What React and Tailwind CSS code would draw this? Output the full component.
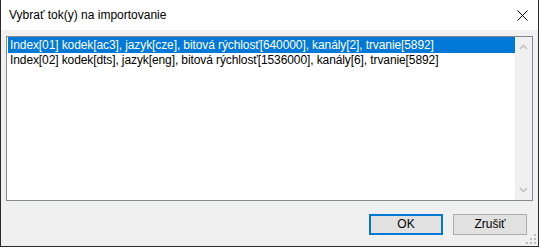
export default function App() {
  const font = { fontFamily: '"Segoe UI", "Liberation Sans", Arial, sans-serif' };
  return (
    <div
      className="w-[539px] h-[247px] flex flex-col bg-[#f0f0f0] border-l border-r border-b border-[#2b2b2b] relative text-[12px] text-black"
      style={font}
    >
      {/* Title bar */}
      <div className="h-[30px] bg-white flex items-center justify-between shrink-0">
        <span className="pl-[8px] leading-[15px]">Vybrať tok(y) na importovanie</span>
        <div className="w-[30px] h-[30px] mr-[1px] flex items-center justify-center">
          <svg width="11" height="11" viewBox="0 0 11 11">
            <path d="M0.5 0.5 L10.5 10.5 M10.5 0.5 L0.5 10.5" stroke="#000" strokeWidth="1" />
          </svg>
        </div>
      </div>

      {/* Body */}
      <div className="flex flex-col pt-[6px] pl-[5px] pr-[5px]">
        <div className="h-[165px] border border-[#828790] bg-white flex">
          <div className="flex-1 pl-[1px] flex flex-col tracking-[-0.1px]">
            <div className="h-[16px] bg-[#0078d7] text-white pl-[2px] leading-[16px] whitespace-nowrap">
              Index[01] kodek[ac3], jazyk[cze], bitová rýchlosť[640000], kanály[2], trvanie[5892]
            </div>
            <div className="h-[15px] pl-[2px] leading-[14px] whitespace-nowrap">
              Index[02] kodek[dts], jazyk[eng], bitová rýchlosť[1536000], kanály[6], trvanie[5892]
            </div>
          </div>
          <div className="w-[17px] bg-[#f0f0f0] flex flex-col justify-between items-center py-[7px]">
            <svg width="9" height="6" viewBox="0 0 9 6">
              <path d="M1 5 L4.5 1.5 L8 5" stroke="#c2c2c2" strokeWidth="1.6" fill="none" />
            </svg>
            <svg width="9" height="6" viewBox="0 0 9 6">
              <path d="M1 1 L4.5 4.5 L8 1" stroke="#c2c2c2" strokeWidth="1.6" fill="none" />
            </svg>
          </div>
        </div>

        {/* Buttons */}
        <div className="flex justify-end gap-[10px] mt-[13px] pr-[6px]">
          <button className="w-[74px] h-[21px] bg-[#e1e1e1] border-2 border-[#0078d7] flex items-center justify-center leading-[15px]">
            OK
          </button>
          <button className="w-[74px] h-[21px] bg-[#e1e1e1] border border-[#adadad] flex items-center justify-center leading-[15px]">
            Zrušiť
          </button>
        </div>
      </div>

      {/* Size grip */}
      <svg className="absolute right-[1px] bottom-[1px]" width="11" height="11" viewBox="0 0 11 11">
        <rect x="8" y="0" width="2" height="2" fill="#bcbcbc" />
        <rect x="4" y="4" width="2" height="2" fill="#bcbcbc" />
        <rect x="8" y="4" width="2" height="2" fill="#bcbcbc" />
        <rect x="0" y="8" width="2" height="2" fill="#bcbcbc" />
        <rect x="4" y="8" width="2" height="2" fill="#bcbcbc" />
        <rect x="8" y="8" width="2" height="2" fill="#bcbcbc" />
      </svg>
    </div>
  );
}
